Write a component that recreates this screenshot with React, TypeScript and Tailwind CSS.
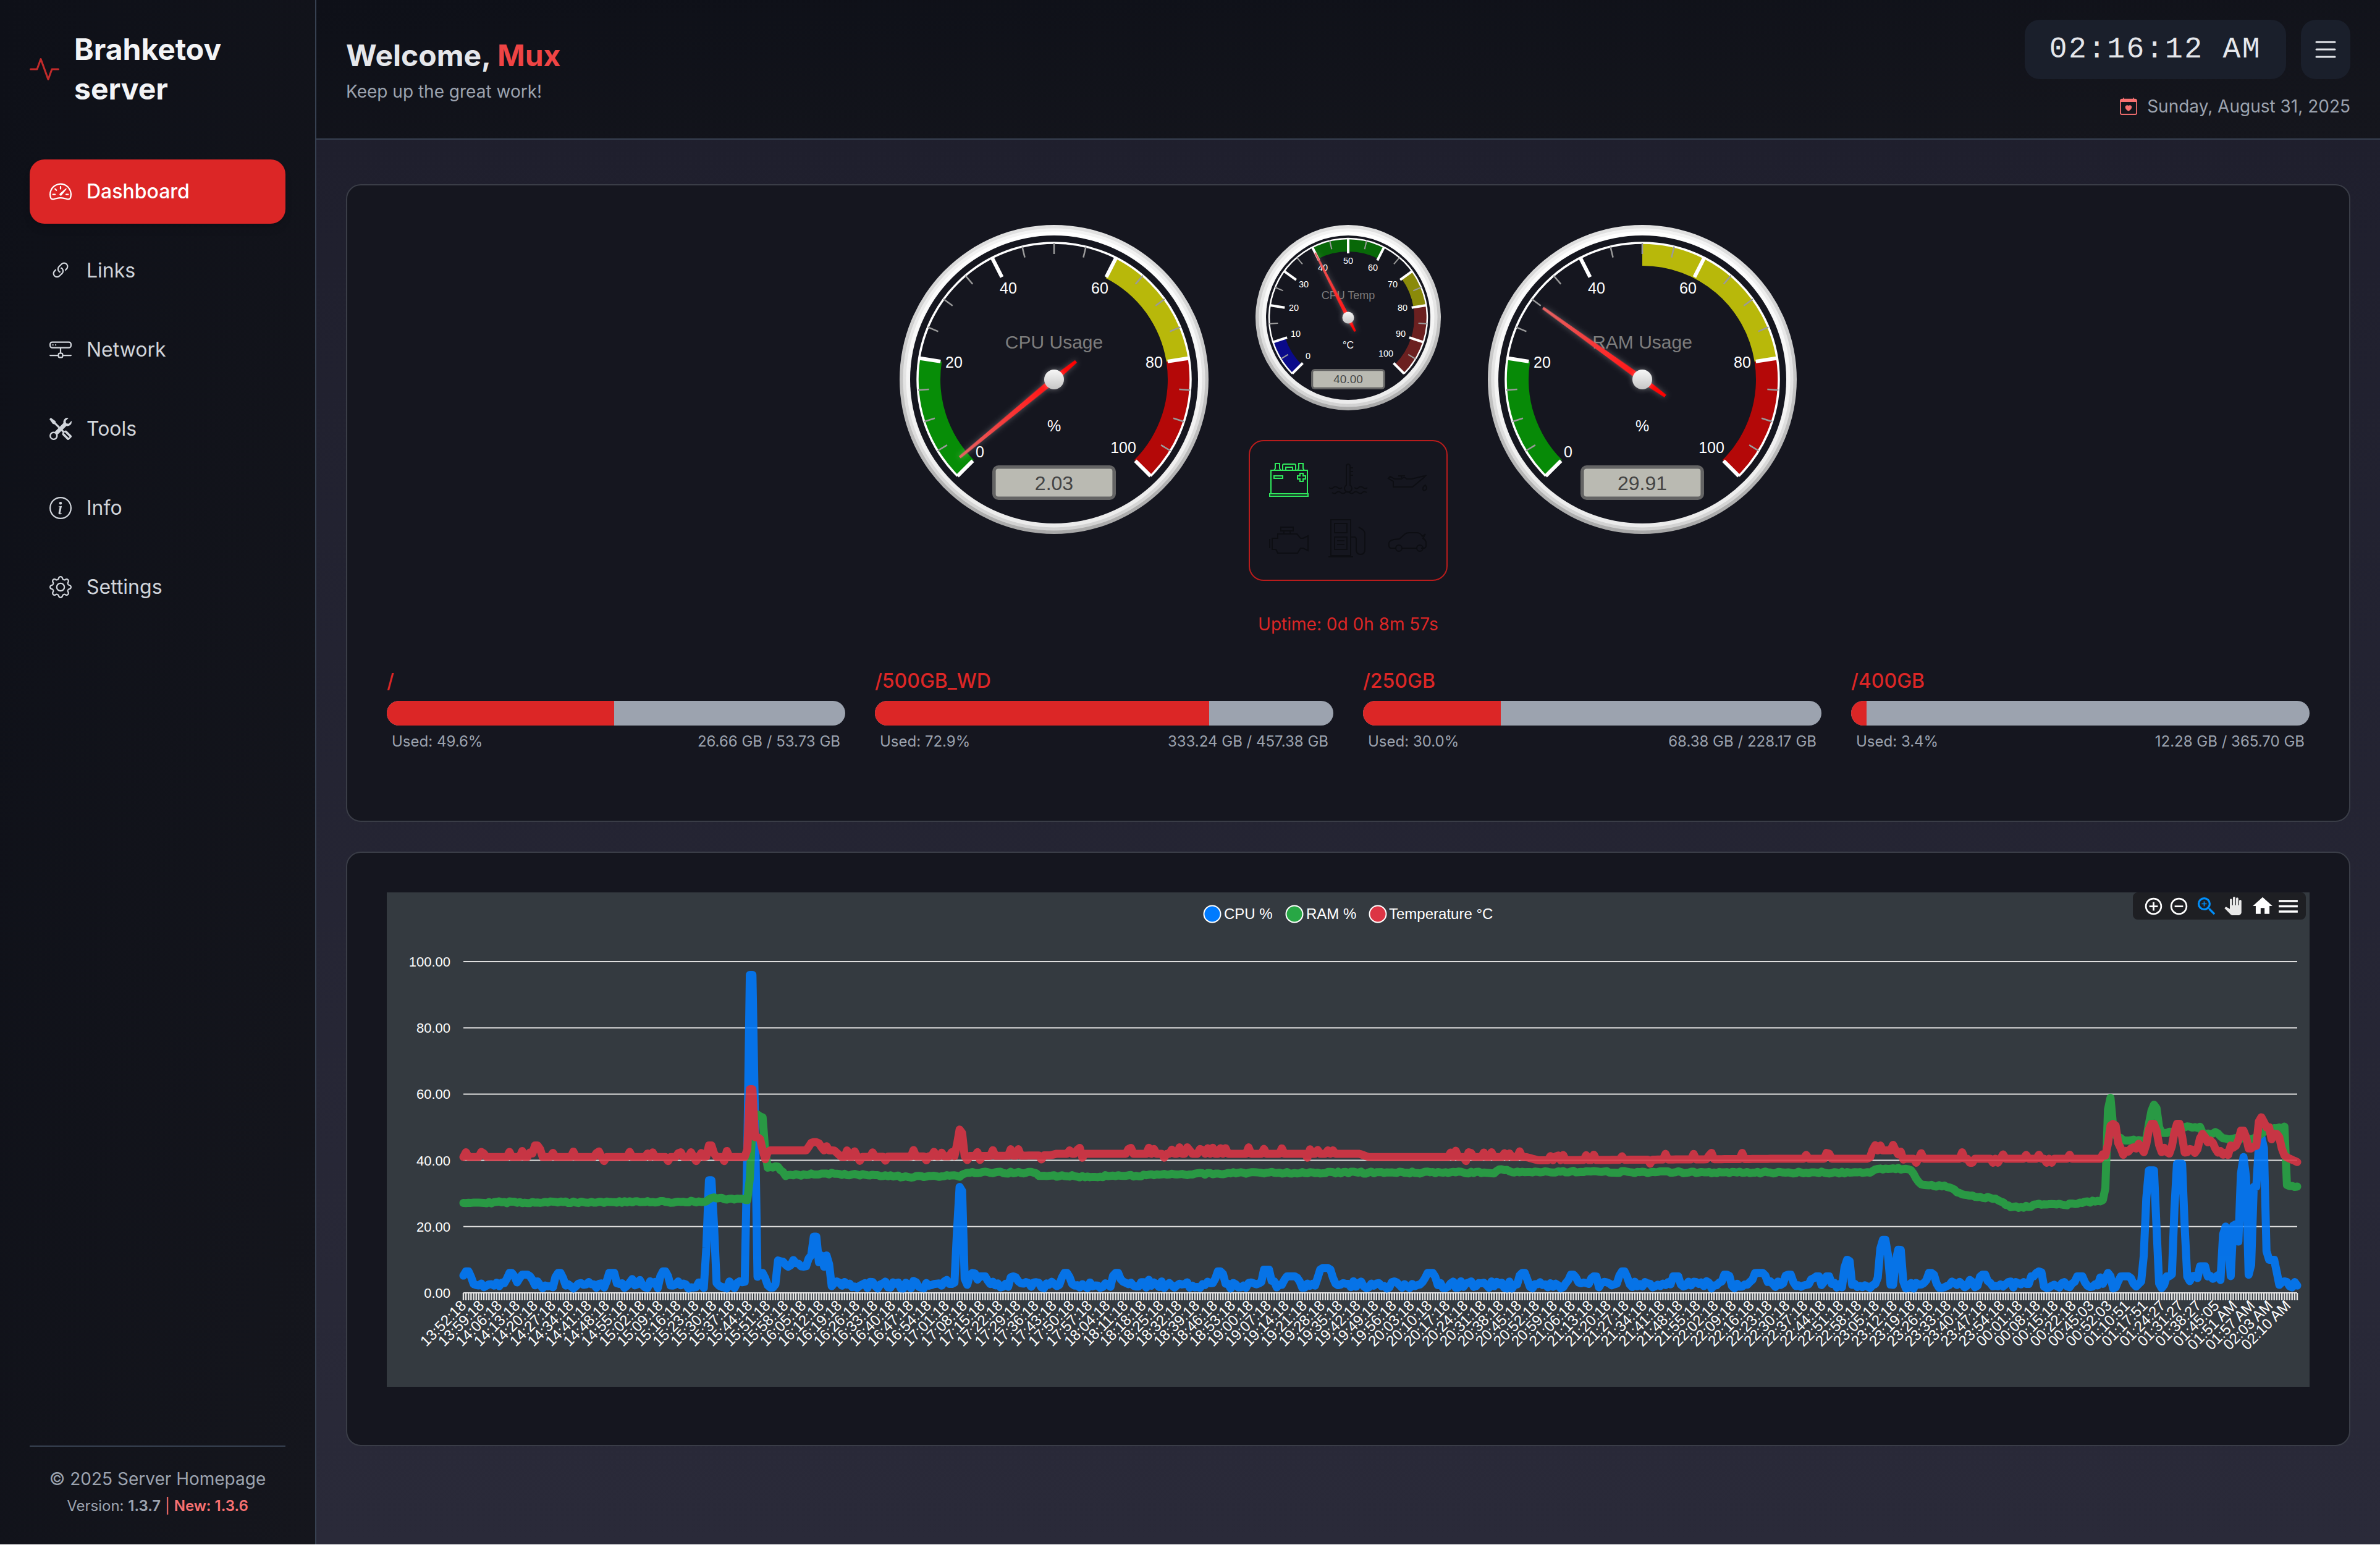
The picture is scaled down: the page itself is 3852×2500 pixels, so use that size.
import React from 'react';
import {
  BsActivity,
  BsCalendarHeart,
  BsGear,
  BsHddNetwork,
  BsInfoCircle,
  BsLink45Deg,
  BsList,
  BsSpeedometer2,
  BsTools,
} from 'react-icons/bs';
import {
  MdAddCircleOutline,
  MdHome,
  MdMenu,
  MdPanTool,
  MdRemoveCircleOutline,
  MdZoomIn,
} from 'react-icons/md';

const navItems = [
  { label: 'Dashboard', icon: BsSpeedometer2, active: true },
  { label: 'Links', icon: BsLink45Deg },
  { label: 'Network', icon: BsHddNetwork },
  { label: 'Tools', icon: BsTools },
  { label: 'Info', icon: BsInfoCircle },
  { label: 'Settings', icon: BsGear },
];

const disks = [
  { name: '/', pct: 49.6, size: '26.66 GB / 53.73 GB' },
  { name: '/500GB_WD', pct: 72.9, size: '333.24 GB / 457.38 GB' },
  { name: '/250GB', pct: 30.0, size: '68.38 GB / 228.17 GB' },
  { name: '/400GB', pct: 3.4, size: '12.28 GB / 365.70 GB' },
];

// gauge geometry, angles are clockwise from the top
const polar = (r: number, deg: number) => {
  const a = (deg * Math.PI) / 180;
  return [r * Math.sin(a), -r * Math.cos(a)];
};
const toDeg = (v: number) => -135 + v * 2.7;

const bandPath = (from: number, to: number, r0: number, r1: number) => {
  const a0 = toDeg(from);
  const a1 = toDeg(to);
  const big = a1 - a0 > 180 ? 1 : 0;
  const [x0, y0] = polar(r1, a0);
  const [x1, y1] = polar(r1, a1);
  const [x2, y2] = polar(r0, a1);
  const [x3, y3] = polar(r0, a0);
  return `M${x0} ${y0}A${r1} ${r1} 0 ${big} 1 ${x1} ${y1}L${x2} ${y2}A${r0} ${r0} 0 ${big} 0 ${x3} ${y3}Z`;
};

interface GaugeSpec {
  radius: number;
  hole: number;
  arc: number;
  arcWidth: number;
  band: [number, number];
  major: [number, number];
  minor: [number, number];
  majorWidth: number;
  minorWidth: number;
  majorStep: number;
  minorStep: number;
  labelSize: number;
  labelLift: number;
  titleSize: number;
  titleY: number;
  unitY: number;
  unitSize: number;
  box: [number, number, number, number];
  valueSize: number;
  needle: [number, number, number];
  hub: number;
  labels: [string, number, number][];
}

const bigSpec: GaugeSpec = {
  radius: 250,
  hole: 233,
  arc: 221,
  arcWidth: 3.5,
  band: [184, 220],
  major: [186, 221],
  minor: [203, 221],
  majorWidth: 6,
  minorWidth: 2.5,
  majorStep: 20,
  minorStep: 5,
  labelSize: 25,
  labelLift: 9,
  titleSize: 30,
  titleY: -61,
  unitY: 75,
  unitSize: 25,
  box: [-100, 139, 200, 56],
  valueSize: 32,
  needle: [198, 46, 5],
  hub: 16,
  labels: [
    ['0', -120, 117],
    ['20', -162, -28],
    ['40', -74, -148],
    ['60', 74, -148],
    ['80', 162, -28],
    ['100', 112, 110],
  ],
};

const smallSpec: GaugeSpec = {
  radius: 150,
  hole: 133,
  arc: 128,
  arcWidth: 2.5,
  band: [107, 127],
  major: [104, 128],
  minor: [114, 128],
  majorWidth: 4,
  minorWidth: 2,
  majorStep: 10,
  minorStep: 5,
  labelSize: 14.5,
  labelLift: 5,
  titleSize: 18,
  titleY: -36,
  unitY: 44,
  unitSize: 16,
  box: [-60, 83, 120, 33],
  valueSize: 19,
  needle: [118, 25, 3.2],
  hub: 9.5,
  labels: [
    ['0', -65, 62],
    ['10', -85, 26],
    ['20', -88, -16],
    ['30', -72, -54],
    ['40', -41, -81],
    ['50', 0, -92],
    ['60', 40, -81],
    ['70', 72, -54],
    ['80', 88, -16],
    ['90', 85, 26],
    ['100', 61, 58],
  ],
};

const Gauge: React.FC<{
  id: string;
  spec: GaugeSpec;
  title: string;
  unit: string;
  value: number;
  display: string;
  ranges: [number, number, string][];
}> = ({ id, spec, title, unit, value, display, ranges }) => {
  const R = spec.radius;
  const ticks: React.ReactNode[] = [];
  for (let v = 0; v <= 100; v += spec.minorStep) {
    const isMajor = v % spec.majorStep === 0;
    const [r0, r1] = isMajor ? spec.major : spec.minor;
    const [x0, y0] = polar(r0, toDeg(v));
    const [x1, y1] = polar(r1, toDeg(v));
    ticks.push(
      <line
        key={v}
        x1={x0}
        y1={y0}
        x2={x1}
        y2={y1}
        stroke={isMajor ? '#ffffff' : '#9a9a9a'}
        strokeWidth={isMajor ? spec.majorWidth : spec.minorWidth}
      />
    );
  }
  const [bx, by, bw, bh] = spec.box;
  const [len, tail, w] = spec.needle;
  return (
    <svg width={R * 2} height={R * 2} viewBox={`${-R} ${-R} ${R * 2} ${R * 2}`} className="block shrink-0">
      <defs>
        <linearGradient id={`${id}-a`} x1="0" y1="0" x2="0" y2="1">
          <stop offset="0" stopColor="#e2e2e2" />
          <stop offset="1" stopColor="#a9a9a9" />
        </linearGradient>
        <linearGradient id={`${id}-b`} x1="0" y1="0" x2="0" y2="1">
          <stop offset="0" stopColor="#f4f4f4" />
          <stop offset="1" stopColor="#d2d2d2" />
        </linearGradient>
        <linearGradient id={`${id}-c`} x1="0" y1="0" x2="0" y2="1">
          <stop offset="0" stopColor="#ffffff" />
          <stop offset="1" stopColor="#ebebeb" />
        </linearGradient>
        <linearGradient id={`${id}-hub`} x1="0" y1="0" x2="0" y2="1">
          <stop offset="0" stopColor="#f7f7f7" />
          <stop offset="1" stopColor="#c6c6c6" />
        </linearGradient>
        <linearGradient id={`${id}-needle`} x1="0" y1="0" x2="0" y2="1">
          <stop offset="0" stopColor="#e46464" />
          <stop offset="0.6" stopColor="#ff2424" />
          <stop offset="1" stopColor="#ff0000" />
        </linearGradient>
      </defs>
      <circle r={R} fill={`url(#${id}-a)`} />
      <circle r={R - (R - spec.hole) * 0.32} fill={`url(#${id}-b)`} />
      <circle r={R - (R - spec.hole) * 0.62} fill={`url(#${id}-c)`} />
      <circle r={spec.hole} fill="#15161f" />
      {ranges.map(([from, to, color]) => (
        <path key={from} d={bandPath(from, to, spec.band[0], spec.band[1])} fill={color} />
      ))}
      <path d={bandPath(0, 100, spec.arc, spec.arc)} fill="none" stroke="#ffffff" strokeWidth={spec.arcWidth} />
      {ticks}
      <g className="font-['Liberation_Sans',sans-serif]" textAnchor="middle">
        {spec.labels.map(([t, x, y]) => (
          <text key={t} x={x} y={y + spec.labelLift} fontSize={spec.labelSize} fill="#ffffff">
            {t}
          </text>
        ))}
        <text y={spec.titleY + spec.titleSize * 0.36} fontSize={spec.titleSize} fill="#7d7d7d">
          {title}
        </text>
        <text y={spec.unitY + spec.unitSize * 0.36} fontSize={spec.unitSize} fill="#ffffff">
          {unit}
        </text>
        <rect x={bx} y={by} width={bw} height={bh} rx={R * 0.04} fill="#646464" />
        <rect
          x={bx + bh * 0.1}
          y={by + bh * 0.1}
          width={bw - bh * 0.2}
          height={bh * 0.8}
          rx={R * 0.016}
          fill="#babab2"
        />
        <text y={by + bh * 0.5 + spec.valueSize * 0.36} fontSize={spec.valueSize} fill="#444444">
          {display}
        </text>
      </g>
      <g transform={`rotate(${toDeg(value)})`} className="drop-shadow-[0_0_5px_rgba(255,255,255,0.3)]">
        <polygon
          points={`${-w * 0.45},${-len} ${w * 0.45},${-len} ${w},0 ${w * 0.5},${tail} ${-w * 0.5},${tail} ${-w},0`}
          fill={`url(#${id}-needle)`}
        />
      </g>
      <circle r={spec.hub} fill={`url(#${id}-hub)`} className="drop-shadow-[0_0_5px_rgba(255,255,255,0.35)]" />
    </svg>
  );
};

const green = '#2fe85c';
const dark = '#0d0e13';

const statusIcons = [
  <g key="battery" stroke={green}>
    <rect x="3" y="12" width="59" height="38" />
    <rect x="1" y="50" width="62" height="4" />
    <path d="M8 12l2-3V1h7v8l2 3M46 12l2-3V1h7v8l2 3M22 12V4q0-2 2-2h17q2 0 2 2v8M27 12V7h11v5" />
    <rect x="8" y="21" width="14" height="4" />
    <path d="M46 21h4v-4h5v4h4v5h-4v4h-5v-4h-4z" />
  </g>,
  <g key="coolant" stroke={dark}>
    <path d="M29 36V4q3-4 6 0v32a6 6 0 1 1-6 0zM35 8h5M35 14h5M35 20h5" />
    <path d="M1 40q4 3 7 0t7 0 7 0M42 40q4 3 7 0t7 0 7 0M6 48q4 3 7 0t7 0 7 0 7 0 7 0 7 0 7 0 7 0" />
  </g>,
  <g key="oil" stroke={dark} transform="translate(0 6)">
    <path d="M1 19l3-3 7 4h11l3-2h3l3 2h8l16-4 6-1-4 4-17 14H9V24z" />
    <path d="M61 30q4 6 0 8t-4-2 4-6z" />
    <path d="M22 18v-3M17 15h11" />
  </g>,
  <g key="engine" stroke={dark}>
    <path d="M19 8h20v6H19zM24 14v5M34 14v5M5 26h9v-7h31l6 7h4l8-4v24l-8-4h-4l-5 8H14l-3-6H5z" />
    <path d="M1 27v15" />
  </g>,
  <g key="fuel" stroke={dark}>
    <rect x="4" y="-4" width="32" height="58" />
    <rect x="10" y="2" width="20" height="15" />
    <rect x="10" y="24" width="20" height="20" />
    <path d="M14 30h12M14 36h12M0 56h40M36 24h6q3 0 3 4v16q0 8 7 8t7-8V18q0-5-10-10" />
  </g>,
  <g key="car" stroke={dark} transform="translate(0 2)">
    <path d="M2 36q-2-8 8-10l9-1 9-8q3-2 7-2h12q6 0 9 6l5-4-4 7q4 2 5 6v6q0 4-4 4h-4M14 40H6q-4 0-4-4M22 40h26" />
    <circle cx="18" cy="40" r="5" />
    <circle cx="52" cy="40" r="5" />
  </g>,
];

// chart data, sampled once per minute across the plot
const plotLeft = 750;
const plotRight = 3718;
const baseY = 2090;
const samples = 718;
const unitY = 5.36;

const makeRandom = (seed: number) => () => {
  seed |= 0;
  seed = (seed + 0x6d2b79f5) | 0;
  let t = Math.imul(seed ^ (seed >>> 15), 1 | seed);
  t = (t + Math.imul(t ^ (t >>> 7), 61 | t)) ^ t;
  return ((t ^ (t >>> 14)) >>> 0) / 4294967296;
};

const interpolate = (keys: number[][], x: number) => {
  if (x <= keys[0][0]) return keys[0][1];
  for (let i = 1; i < keys.length; i++) {
    if (x <= keys[i][0]) {
      const [x0, y0] = keys[i - 1];
      const [x1, y1] = keys[i];
      return y0 + ((y1 - y0) * (x - x0)) / (x1 - x0);
    }
  }
  return keys[keys.length - 1][1];
};

// peaks have a flat top so a sample always lands on the full height
const bumpAt = (bumps: number[][], x: number) => {
  let top = 0;
  for (const [cx, h, w] of bumps) {
    top = Math.max(top, h * Math.min(1, (1 - Math.abs(x - cx) / w) * 1.6));
  }
  return top;
};

const cpuBumps = [
  [756, 6.5, 12], [827, 6, 12], [850, 5.5, 18], [905, 6, 12], [990, 6, 12], [1075, 6.5, 12],
  [1150, 34, 9], [1216, 96, 9], [1232, 6, 12], [1319, 17, 8], [1554, 32, 8], [1574, 6, 10], [1590, 5, 16],
  [1640, 5, 10], [1725, 6, 12], [1807, 6, 12], [1974, 6.5, 12], [2050, 7, 12], [2090, 5, 22],
  [2145, 7.5, 20], [2315, 6, 16], [2465, 6, 12], [2545, 5.5, 12], [2580, 5, 10], [2627, 6.5, 12],
  [2712, 5, 12], [2794, 5.5, 12], [2848, 6, 20], [2895, 5.5, 12], [2941, 5, 10], [2958, 5, 10],
  [2990, 10, 9], [3049, 16, 12], [3073, 13, 9], [3125, 6, 12], [3210, 5.5, 12], [3290, 5, 10],
  [3300, 6.5, 10], [3366, 5, 14], [3412, 6, 8], [3440, 5, 20], [3481, 37, 14], [3510, 5, 10],
  [3527, 39, 13], [3565, 8, 12], [3602, 20, 9], [3618, 20.7, 9], [3631, 41, 9], [3651, 32, 9],
  [3660, 47, 10], [3677, 10, 13],
];

const redBumps = [
  [869, 3.5, 9], [1150, 3.5, 7], [1216, 20.5, 7], [1225, 6, 12], [1319, 2.5, 14], [1554, 8, 7],
  [3420, 8, 10], [3484, 8, 12], [3525, 8, 10], [3565, 5, 8], [3577, 3, 8], [3630, 6, 9], [3660, 10, 9],
  [3671, 7, 8], [3684, 5, 10],
];

const greenKeys = [
  [750, 27.3], [1145, 27.5], [1150, 28.6], [1212, 28.1], [1218, 52], [1224, 54], [1235, 53], [1240, 38],
  [1260, 37.9], [1272, 35.5], [1340, 36], [1427, 35.3], [1476, 35], [1553, 35.3], [1562, 36.3], [1673, 36.3],
  [1682, 35.3], [1720, 35.3], [1760, 35.1], [2030, 36.3], [2420, 36.3], [2430, 37.4], [2450, 36.6], [2900, 36.3],
  [3026, 36.3], [3036, 37.5], [3092, 37.4], [3108, 32.8], [3158, 32], [3174, 29.5], [3229, 28.5], [3256, 25.8],
  [3284, 26], [3306, 27], [3339, 26.5], [3407, 28], [3411, 55], [3416, 58.8], [3421, 48], [3437, 46],
  [3473, 46], [3483, 56], [3489, 57.8], [3495, 49], [3503, 48], [3536, 50], [3561, 50], [3566, 47.6],
  [3588, 48.5], [3597, 46.6], [3645, 46.4], [3668, 49], [3698, 50], [3701, 32.5], [3718, 32],
];

const redBase = [
  [750, 41], [1236, 41], [1245, 43], [1350, 43], [1362, 41], [1700, 41.5], [1710, 42], [2200, 42], [2215, 41],
  [2470, 41], [2490, 40], [2900, 40.5], [3025, 40.5], [3035, 43], [3075, 43], [3084, 40.5], [3405, 40.5],
  [3412, 43], [3690, 43], [3700, 41], [3718, 39.5],
];

const toPath = (values: number[]) =>
  values
    .map((v, i) => {
      const x = plotLeft + (i * (plotRight - plotLeft)) / (samples - 1) - 626;
      const y = baseY - v * unitY - 1442;
      return `${i ? 'L' : 'M'}${x.toFixed(1)} ${y.toFixed(1)}`;
    })
    .join('');

const buildSeries = () => {
  const r1 = makeRandom(11);
  const r2 = makeRandom(29);
  const r3 = makeRandom(47);
  const cpu: number[] = [];
  const ram: number[] = [];
  const temp: number[] = [];
  for (let i = 0; i < samples; i++) {
    const x = plotLeft + (i * (plotRight - plotLeft)) / (samples - 1);
    let c = 1.3 + r1() * 2.2;
    if (r1() < 0.08) c += 1.2;
    if (x >= 1259 && x <= 1343) c = 7.5 + r1() * 4;
    if (x >= 3520 && x <= 3680) c += 2;
    cpu.push(Math.max(c, bumpAt(cpuBumps, x)));

    ram.push(interpolate(greenKeys, x) + (r2() - 0.5) * 0.6);

    const base = interpolate(redBase, x);
    let t = base;
    const dice = r3();
    if (dice < 0.13) t += 1 + r3();
    else if (dice < 0.17) t -= 1.2;
    if (x >= 3412 && x <= 3690) t += r3() * 3 - 1.5;
    const peak = bumpAt(redBumps, x);
    temp.push(peak > 0 ? Math.max(t, base + peak) : t);
  }
  return { cpu: toPath(cpu), ram: toPath(ram), temp: toPath(temp) };
};

const series = buildSeries();

const pad = (n: number) => String(n).padStart(2, '0');
const xLabels: string[] = [];
for (let m = 13 * 60 + 52; m <= 24 * 60 + 22; m += 7) {
  xLabels.push(`${pad(Math.floor(m / 60) % 24)}:${pad(m % 60)}:18`);
}
xLabels.push(
  '00:45:03', '00:52:03', '01:10:51', '01:17:51', '01:24:27', '01:31:27',
  '01:38:27', '01:45:05', '01:51 AM', '01:57 AM', '02:03 AM', '02:10 AM'
);

const tickPath = Array.from({ length: samples }, (_, i) => {
  const x = 124 + (i * (plotRight - plotLeft)) / (samples - 1);
  return `M${x.toFixed(1)} 648v12`;
}).join('');

const legend = [
  { label: 'CPU %', color: '#007bff', cx: 1336, tx: 1355 },
  { label: 'RAM %', color: '#28a745', cx: 1469, tx: 1488 },
  { label: 'Temperature °C', color: '#dc3545', cx: 1604, tx: 1622 },
];

const UsageChart: React.FC = () => (
  <div className="relative h-[800px] bg-[#343a40]">
    <svg width="3112" height="800" viewBox="0 0 3112 800" className="block font-['Liberation_Sans',sans-serif]">
      {legend.map((item) => (
        <g key={item.label}>
          <circle cx={item.cx} cy="35" r="13.5" fill={item.color} stroke="#ffffff" strokeWidth="2" />
          <text x={item.tx} y="43" fontSize="24" fill="#ffffff">
            {item.label}
          </text>
        </g>
      ))}
      {['100.00', '80.00', '60.00', '40.00', '20.00', '0.00'].map((label, i) => (
        <g key={label}>
          <line x1="124" x2="3092" y1={112 + i * 107.2} y2={112 + i * 107.2} stroke="#e0e0e0" strokeWidth="2" />
          <text x="103" y={120 + i * 107.2} textAnchor="end" fontSize="22" fill="#ffffff">
            {label}
          </text>
        </g>
      ))}
      <path d={tickPath} stroke="#e4e4e4" strokeWidth="2.4" fill="none" />
      <g fill="none" strokeWidth="13" strokeLinejoin="round" strokeLinecap="round" opacity="0.875">
        <path d={series.cpu} stroke="#007bff" />
        <path d={series.ram} stroke="#28a745" />
        <path d={series.temp} stroke="#dc3545" />
      </g>
      <g fontSize="24" fill="#ffffff" textAnchor="end">
        {xLabels.map((label, i) => {
          const x = 130 + i * 28.95;
          return (
            <text key={label + i} x={x} y="670" transform={`rotate(-45 ${x} 670)`}>
              {label}
            </text>
          );
        })}
      </g>
    </svg>
    <div className="absolute top-0 right-[6px] flex h-[44px] w-[280px] items-center rounded-lg bg-[#1e1f23] pl-[17px] text-white">
      <MdAddCircleOutline className="w-[33px] h-[33px] shrink-0" />
      <MdRemoveCircleOutline className="ml-[8px] w-[33px] h-[33px] shrink-0" />
      <MdZoomIn className="ml-[9px] w-[39px] h-[39px] shrink-0 text-[#008ffb]" />
      <MdPanTool className="ml-[8px] w-[30px] h-[30px] shrink-0 text-[#e8e8e8]" />
      <MdHome className="ml-[14px] w-[38px] h-[38px] shrink-0" />
      <MdMenu className="ml-[2px] w-[41px] h-[41px] shrink-0" />
    </div>
  </div>
);

const App: React.FC = () => {
  return (
    <div className="h-[2500px] bg-white">
      <div className="flex h-[2499px] bg-gradient-to-b from-[#1e1e2c] to-[#2a2a39] font-['Inter',sans-serif] text-white">
        <aside className="flex w-[512px] shrink-0 flex-col border-r-2 border-[#374151] bg-gradient-to-br from-[#0e1018] to-[#15161d] p-12 pb-0">
          <div className="flex items-center gap-6">
            <BsActivity className="w-12 h-12 shrink-0 text-[#c22b2b]" />
            <h1 className="text-5xl/[64px] font-bold text-[#f3f4f6]">
              Brahketov
              <br />
              server
            </h1>
          </div>
          <nav className="mt-[82px] flex flex-col gap-6">
            {navItems.map((item) => {
              const Icon = item.icon;
              return (
                <div
                  key={item.label}
                  className={`flex h-[104px] items-center gap-6 rounded-3xl px-8 text-[32px] ${
                    item.active ? 'bg-[#dc2626] font-medium text-white shadow-lg' : 'text-[#d1d5db]'
                  }`}
                >
                  <Icon className="w-9 h-9 shrink-0" />
                  <span>{item.label}</span>
                </div>
              );
            })}
          </nav>
          <div className="mt-auto mb-[46px] border-t-2 border-[#374151] pt-8 text-center">
            <p className="text-[28px]/[40px] text-[#9ca3af]">© 2025 Server Homepage</p>
            <p className="mt-2 text-2xl/8 text-[#9ca3af]">
              Version: <span className="font-semibold">1.3.7</span> <span className="text-[#f87171]">|</span>{' '}
              <span className="font-semibold text-[#f87171]">New: 1.3.6</span>
            </p>
          </div>
        </aside>

        <div className="flex min-w-0 flex-1 flex-col">
          <header className="flex h-[226px] shrink-0 items-start justify-between border-b-2 border-[#374151] bg-gradient-to-br from-[#0e1018] to-[#15161d] px-12 py-8">
            <div className="mt-[26px]">
              <h2 className="text-5xl/[64px] font-bold text-[#e5e7eb]">
                Welcome, <span className="text-[#ef4444]">Mux</span>
              </h2>
              <p className="mt-[6px] text-[28px]/[40px] text-[#9ca3af]">Keep up the great work!</p>
            </div>
            <div className="flex flex-col items-end">
              <div className="flex gap-6">
                <div className="flex h-24 items-center rounded-3xl bg-[#1a1f2b] px-10 font-['Liberation_Mono',monospace] text-5xl tracking-wider text-[#e5e7eb]">
                  02:16:12 AM
                </div>
                <div className="flex h-24 w-20 items-center justify-center rounded-3xl bg-[#1a1f2b] text-[#e5e7eb]">
                  <BsList className="w-12 h-12" />
                </div>
              </div>
              <div className="mt-6 flex items-center gap-4 text-[28px]/[40px] text-[#9ca3af]">
                <BsCalendarHeart className="w-7 h-7 text-[#f87171]" />
                Sunday, August 31, 2025
              </div>
            </div>
          </header>

          <main className="flex flex-1 flex-col gap-12 px-12 pt-[72px]">
            <section className="h-[1032px] rounded-3xl border-2 border-[#3a3d47] bg-[#15161f] p-16">
              <div className="flex justify-center gap-[65px]">
                <Gauge
                  id="cpu"
                  spec={bigSpec}
                  title="CPU Usage"
                  unit="%"
                  value={2.03}
                  display="2.03"
                  ranges={[
                    [0, 20, '#078d07'],
                    [60, 80, '#b8b80a'],
                    [80, 100, '#b40808'],
                  ]}
                />
                <div className="flex w-[322px] flex-col items-center">
                  <Gauge
                    id="temp"
                    spec={smallSpec}
                    title="CPU Temp"
                    unit="°C"
                    value={40}
                    display="40.00"
                    ranges={[
                      [0, 10, '#0a0a8a'],
                      [40, 60, '#086808'],
                      [70, 80, '#8a8a0a'],
                      [80, 100, '#6b2020'],
                    ]}
                  />
                  <div className="mt-12 grid w-[322px] grid-cols-3 rounded-3xl border-2 border-[#b91c1c] p-[15px] pb-[17px]">
                    {statusIcons.map((icon, i) => (
                      <div key={i} className="flex h-24 items-center justify-center">
                        <svg
                          width="64"
                          height="56"
                          viewBox="0 0 64 56"
                          fill="none"
                          strokeWidth="2"
                          className="overflow-visible"
                        >
                          {icon}
                        </svg>
                      </div>
                    ))}
                  </div>
                  <p className="mt-[50px] whitespace-nowrap text-[28px]/[40px] text-[#dc2626]">Uptime: 0d 0h 8m 57s</p>
                </div>
                <Gauge
                  id="ram"
                  spec={bigSpec}
                  title="RAM Usage"
                  unit="%"
                  value={29.91}
                  display="29.91"
                  ranges={[
                    [0, 20, '#078a07'],
                    [50, 80, '#b8b80a'],
                    [80, 100, '#b40808'],
                  ]}
                />
              </div>
              <div className="mt-12 grid grid-cols-4 gap-12">
                {disks.map((disk) => (
                  <div key={disk.name}>
                    <h3 className="mb-2 text-[32px]/[48px] font-medium text-[#dc2626]">{disk.name}</h3>
                    <div className="h-10 overflow-hidden rounded-full bg-[#9ca3af]">
                      <div className="h-full bg-[#dc2626]" style={{ width: `${disk.pct}%` }} />
                    </div>
                    <div className="mt-[10px] flex justify-between px-2 text-2xl/8 text-[#9ca3af]">
                      <span>Used: {disk.pct.toFixed(1)}%</span>
                      <span>{disk.size}</span>
                    </div>
                  </div>
                ))}
              </div>
            </section>

            <section className="rounded-3xl border-2 border-[#3a3d47] bg-[#15161f] px-16 pt-16 pb-[94px]">
              <UsageChart />
            </section>
          </main>
        </div>
      </div>
    </div>
  );
};

export default App;
